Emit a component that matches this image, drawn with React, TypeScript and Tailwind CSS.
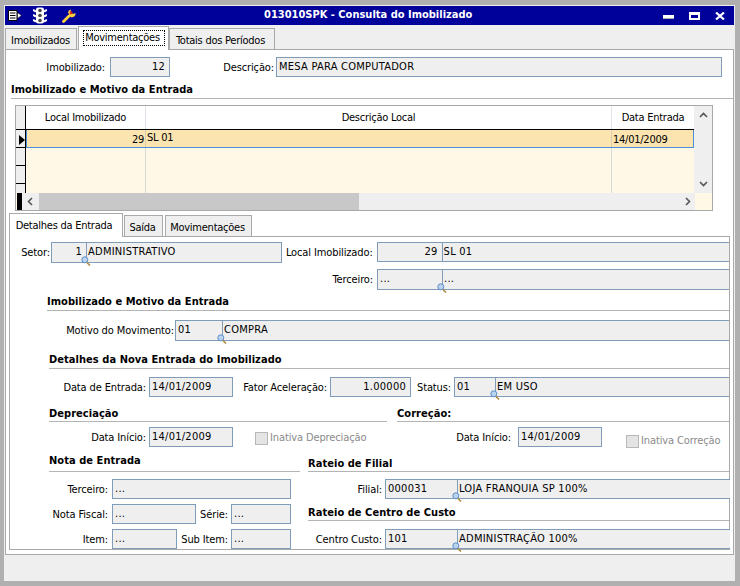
import React from 'react';

const inputCls = 'border border-[#7f9db9] bg-[#efefef] text-[11px] leading-[18px] tracking-[0.25px] whitespace-nowrap';

// magnifier shown at the lower right corner of the lookup fields
const Lens = () => (
  <svg className="absolute right-[-5px] bottom-[-4px]" width="10" height="10" viewBox="0 0 10 10">
    <path d="M5.5 6 L9 9.5" stroke="#b08a40" strokeWidth="1.6" />
    <circle cx="3.8" cy="3.8" r="3" fill="#bcd3ef" stroke="#5d8ec9" strokeWidth="1" />
  </svg>
);

const Label = ({ children, className }: { children: React.ReactNode; className: string }) => (
  <span className={`text-[11px] leading-[16px] pt-[3px] tracking-[-0.12px] whitespace-nowrap text-right shrink-0 ${className}`}>{children}</span>
);

const Box = ({ value, className, right }: { value: string; className: string; right?: boolean }) => (
  <div className={`${inputCls} shrink-0 px-[2px] ${right ? 'text-right pr-[4px]' : ''} ${className}`}>{value}</div>
);

// code + description lookup, runs off to the right edge of the panel
const Lookup = ({ code, text, codeCls, right, lens = true, className }: { code: string; text: string; codeCls: string; right?: boolean; lens?: boolean; className: string }) => (
  <div className={`${inputCls} flex border-r-0 ${className}`}>
    <div className={`relative shrink-0 border-r border-[#7f9db9] px-[2px] ${right ? 'text-right pr-[4px]' : ''} ${codeCls}`}>
      {code}
      {lens && <Lens />}
    </div>
    <div className="px-[1px] flex-1">{text}</div>
  </div>
);

const Heading = ({ children, className }: { children: React.ReactNode; className: string }) => (
  <div className={`border-b border-[#b4b4b4] font-bold text-[11px] leading-[14px] tracking-[0.05px] whitespace-nowrap ${className}`}>{children}</div>
);

const Check = ({ label, className }: { label: string; className: string }) => (
  <div className={`flex items-center gap-[2px] text-[11px] text-[#8a8a8a] tracking-[-0.12px] leading-[14px] ${className}`}>
    <span className="w-[13px] h-[13px] border border-[#b8b8b8] bg-[#e4e4e4] shrink-0" />
    {label}
  </div>
);

const Tab = ({ label, active, className }: { label: React.ReactNode; active?: boolean; className: string }) => (
  <div className={`border border-[#a9a9a9] text-[11px] leading-[14px] text-center ${active ? 'bg-white border-b-0 z-10' : 'bg-[#efefef]'} ${className}`}>{label}</div>
);

const Chevron = ({ d }: { d: string }) => (
  <svg width="9" height="9" viewBox="0 0 9 9"><path d={d} fill="none" stroke="#555" strokeWidth="1.6" /></svg>
);

export default function App() {
  return (
    <div className="w-[740px] h-[586px] bg-[#b0b0b0] pt-[5px] pb-[5px] pl-[4px] pr-[5px] text-black tracking-[-0.25px] font-['DejaVu_Sans_Condensed','DejaVu_Sans',sans-serif] overflow-hidden">
      <div className="h-full flex flex-col bg-[#efefef]">
        {/* title bar */}
        <div className="h-[19px] mt-px ml-px mr-px shrink-0 bg-[#00009b] flex items-center relative text-white">
          <svg className="ml-[3px]" width="14" height="11" viewBox="0 0 14 11">
            <path d="M0.5 0.5h8.5v10h-8.5z" fill="#fff" stroke="#000" />
            <path d="M2 3h5.5M2 5.5h5.5M2 8h5.5" stroke="#000" />
            <path d="M9.5 2.5l4 3-4 3z" fill="#fff" stroke="#000" strokeWidth="0.6" />
          </svg>
          <svg className="ml-[11px]" width="14" height="17" viewBox="0 0 14 17">
            <path d="M0 3l3 1.5M14 3l-3 1.5M0 8l3 1.5M14 8l-3 1.5M0 13l3 1.5M14 13l-3 1.5" stroke="#fff" strokeWidth="2" />
            <rect x="3" y="0.5" width="8" height="16" rx="2" fill="#fff" />
            <circle cx="7" cy="3.5" r="1.8" fill="#444" />
            <circle cx="7" cy="8.5" r="1.8" fill="#444" />
            <circle cx="7" cy="13.5" r="1.8" fill="#444" />
          </svg>
          <svg className="ml-[15px]" width="14" height="14" viewBox="0 0 14 14">
            <path d="M1.5 12.5 L7 7" stroke="#ffd23c" strokeWidth="2.8" strokeLinecap="round" />
            <path d="M6 3.5 A3.4 3.4 0 0 1 9 0.5 L8.5 3 L11 5 L13.5 4 A3.6 3.6 0 0 1 8.5 8z" fill="#ffd23c" />
            <circle cx="9" cy="3.8" r="1.5" fill="#e02020" />
          </svg>
          <span className="absolute left-[259px] top-[2px] font-bold text-[11px] leading-[14px] tracking-normal whitespace-nowrap">013010SPK - Consulta do Imobilizado</span>
          <div className="ml-auto flex items-center">
            <span className="w-[11px] h-[4px] bg-white border-b border-[#aaa] mr-[15px] mt-[3px]" />
            <span className="w-[11px] h-[8px] border-2 border-white border-t-[3px] mr-[15px]" />
            <svg className="mr-[9px]" width="10" height="8" viewBox="0 0 10 8"><path d="M1 0.5L9 7.5M9 0.5L1 7.5" stroke="#fff" strokeWidth="2.2" /></svg>
          </div>
        </div>

        {/* main tabs */}
        <div className="h-[25px] shrink-0 flex items-end pl-[1px] -mb-px">
          <Tab label="Imobilizados" className="w-[72px] h-[22px] pt-[5px] pr-px mr-px" />
          <Tab
            label={<div className="ml-[4px] mr-[3px] pr-[3px] h-[16px] border border-dotted border-black">Movimentações</div>}
            active
            className="w-[91px] h-[24px] pt-[3px]"
          />
          <Tab label="Totais dos Períodos" className="w-[106px] h-[22px] pt-[5px] pr-[3px]" />
        </div>

        {/* page */}
        <div className="h-[506px] shrink-0 ml-px mr-px bg-white border border-[#a9a9a9] flex flex-col">
          <div className="flex items-start h-[28px] pt-[7px]">
            <Label className="w-[99px]">Imobilizado:</Label>
            <Box value="12" right className="w-[60px] h-[20px] ml-[5px]" />
            <Label className="w-[104px]">Descrição:</Label>
            <Box value="MESA PARA COMPUTADOR" className="w-[446px] h-[20px] ml-[2px]" />
          </div>
          <Heading className="ml-[5px] h-[21px] pt-[5px]">Imobilizado e Motivo da Entrada</Heading>

          {/* grid */}
          <div className="ml-[9px] mt-[6px] w-[698px] h-[106px] shrink-0 border border-[#a9a9a9] flex flex-col bg-[#fff8e7]">
            <div className="h-[87px] flex">
              <div className="w-[678px] flex flex-col">
                <div className="h-[24px] flex bg-white border-b border-black text-[11px] leading-[24px] text-center shrink-0">
                  <div className="w-[10px] bg-[#efefef] border-r border-black shrink-0" />
                  <div className="w-[120px] border-r border-[#dfe3ea]">Local Imobilizado</div>
                  <div className="w-[466px] border-r border-[#dfe3ea]">Descrição Local</div>
                  <div className="flex-1">Data Entrada</div>
                </div>
                <div className="h-[18px] flex text-[11px] leading-[16px] shrink-0">
                  <div className="w-[10px] bg-[#efefef] border-r border-b border-black shrink-0 flex items-center justify-end pt-[3px]">
                    <span className="border-y-[5px] border-y-transparent border-l-[6px] border-l-black" />
                  </div>
                  <div className="flex-1 flex bg-[#fbe4b0] border-b border-l border-r border-[#4a90d9] min-w-0">
                    <div className="w-[119px] border-r border-[#d8cfb0] text-right pr-[1px] pt-[2px]">29</div>
                    <div className="w-[466px] border-r border-[#d8cfb0] pl-[1px]">SL 01</div>
                    <div className="flex-1 pl-[1px] pt-[2px]">14/01/2009</div>
                  </div>
                </div>
                <div className="flex-1 flex">
                  <div className="w-[10px] bg-[#efefef] border-r border-black shrink-0 flex flex-col">
                    <div className="h-[18px] border-b border-black" />
                    <div className="h-[18px] border-b border-black" />
                  </div>
                  <div className="w-[120px] border-r border-[#d8d8d8]" />
                  <div className="w-[466px] border-r border-[#d8d8d8]" />
                </div>
              </div>
              <div className="w-[18px] bg-[#efefef] flex flex-col items-center justify-between py-[5px] shrink-0">
                <Chevron d="M1 6l3.5-3.5L8 6" />
                <Chevron d="M1 3l3.5 3.5L8 3" />
              </div>
            </div>
            <div className="h-[17px] flex items-stretch">
              <div className="w-[5px] bg-black ml-[1px]" />
              <div className="w-[17px] bg-[#efefef] flex items-center justify-center"><Chevron d="M6 1L2.5 4.5L6 8" /></div>
              <div className="w-[320px] bg-[#c8c8c8]" />
              <div className="w-[336px] bg-[#efefef] flex items-center justify-end pr-[3px] shrink-0"><Chevron d="M3 1l3.5 3.5L3 8" /></div>
            </div>
          </div>

          {/* detail tabs */}
          <div className="h-[26px] flex items-end pl-[3px] shrink-0 -mb-px">
            <Tab label="Detalhes da Entrada" active className="w-[114px] h-[24px] pt-[5px] pr-[4px]" />
            <Tab label="Saída" className="w-[39px] h-[22px] pt-[5px] pr-[2px] ml-[1px]" />
            <Tab label="Movimentações" className="w-[87px] h-[22px] pt-[5px] pr-[2px] ml-[2px]" />
          </div>

          <div className="h-[314px] ml-[3px] w-[721px] border border-[#a9a9a9] shrink-0 flex flex-col overflow-visible">
            <div className="h-[26px] flex items-start pt-[5px] shrink-0">
              <Label className="w-[40px]">Setor:</Label>
              <Lookup code="1" text="ADMINISTRATIVO" right codeCls="w-[35px]" className="w-[231px] h-[21px] ml-px border-r!" />
              <Label className="w-[91px]">Local Imobilizado:</Label>
              <Lookup code="29" text="SL 01" right lens={false} codeCls="w-[65px]" className="w-[353px] h-[20px] ml-[4px]" />
            </div>
            <div className="h-[26px] flex items-start pt-[6px] shrink-0">
              <Label className="w-[363px]">Terceiro:</Label>
              <Lookup code="..." text="..." codeCls="w-[65px]" className="w-[353px] h-[21px] ml-[4px]" />
            </div>
            <Heading className="ml-[37px] h-[22px] pt-[6px] shrink-0">Imobilizado e Motivo da Entrada</Heading>
            <div className="h-[30px] flex items-start pt-[9px] shrink-0">
              <Label className="w-[164px]">Motivo do Movimento:</Label>
              <Lookup code="01" text="COMPRA" codeCls="w-[47px]" className="w-[555px] h-[21px] ml-px" />
            </div>
            <Heading className="ml-[39px] h-[28px] pt-[12px] shrink-0">Detalhes da Nova Entrada do Imobilizado</Heading>
            <div className="h-[29px] flex items-start pt-[8px] shrink-0">
              <Label className="w-[136px]">Data de Entrada:</Label>
              <Box value="14/01/2009" className="w-[84px] h-[20px] ml-[3px]" />
              <Label className="w-[94px]">Fator Aceleração:</Label>
              <Box value="1.00000" right className="w-[81px] h-[20px] ml-[3px]" />
              <Label className="w-[40px]">Status:</Label>
              <Lookup code="01" text="EM USO" codeCls="w-[41px]" className="w-[276px] h-[20px] ml-[3px]" />
            </div>

            <div className="flex h-[24px] pt-[4px] shrink-0">
              <Heading className="ml-[39px] w-[338px] h-[20px] pt-[5px]">Depreciação</Heading>
              <Heading className="ml-[10px] flex-1 h-[20px] pt-[5px]">Correção:</Heading>
            </div>
            <div className="flex h-[32px] items-start pt-[5px] shrink-0">
              <Label className="w-[136px]">Data Início:</Label>
              <Box value="14/01/2009" className="w-[84px] h-[20px] ml-[3px]" />
              <Check label="Inativa Depreciação" className="ml-[22px] mt-[4px] w-[140px] shrink-0" />
              <Label className="w-[116px]">Data Início:</Label>
              <Box value="14/01/2009" className="w-[84px] h-[20px] ml-[7px]" />
              <Check label="Inativa Correção" className="ml-[24px] mt-[7px] shrink-0" />
            </div>

            <div className="flex flex-1 min-h-0">
              <div className="w-[298px] shrink-0">
                <Heading className="ml-[39px] w-[251px] h-[18px]">Nota de Entrada</Heading>
                <div className="flex items-start mt-[7px] h-[25px]">
                  <Label className="w-[98px]">Terceiro:</Label>
                  <Box value="..." className="w-[179px] h-[20px] ml-[4px]" />
                </div>
                <div className="flex items-start h-[25px]">
                  <Label className="w-[98px]">Nota Fiscal:</Label>
                  <Box value="..." className="w-[84px] h-[20px] ml-[4px]" />
                  <Label className="w-[32px]">Série:</Label>
                  <Box value="..." className="w-[60px] h-[20px] ml-[3px]" />
                </div>
                <div className="flex items-start h-[20px]">
                  <Label className="w-[98px]">Item:</Label>
                  <Box value="..." className="w-[65px] h-[20px] ml-[4px]" />
                  <Label className="w-[51px]">Sub Item:</Label>
                  <Box value="..." className="w-[60px] h-[20px] ml-[3px]" />
                </div>
              </div>
              <div className="flex-1 min-w-0">
                <Heading className="h-[18px] pt-[3px]">Rateio de Filial</Heading>
                <div className="flex items-start mt-[7px] h-[20px]">
                  <Label className="w-[74px]">Filial:</Label>
                  <Lookup code="000031" text="LOJA FRANQUIA SP 100%" codeCls="w-[72px]" className="flex-1 h-[20px] ml-[3px] -mr-px" />
                </div>
                <Heading className="h-[22px] pt-[7px]">Rateio de Centro de Custo</Heading>
                <div className="flex items-start mt-[8px] h-[20px]">
                  <Label className="w-[74px]">Centro Custo:</Label>
                  <Lookup code="101" text="ADMINISTRAÇÃO 100%" codeCls="w-[72px]" className="flex-1 h-[20px] ml-[3px] -mr-px" />
                </div>
              </div>
            </div>
          </div>
        </div>
      </div>
    </div>
  );
}
